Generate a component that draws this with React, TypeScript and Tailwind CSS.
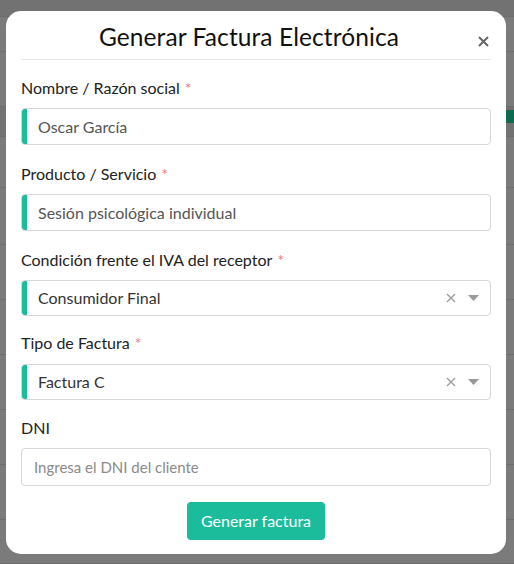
import React from "react";

const font = { fontFamily: "Lato, 'Open Sans', sans-serif" };

function Label({ text, required }: { text: string; required?: boolean }) {
  return (
    <div className="h-[20px] flex items-center text-[16px] text-[#222] leading-none">
      <span>{text}</span>
      {required && <span className="ml-[5px] text-[#e8807a]">*</span>}
    </div>
  );
}

function TextField({ value, accent }: { value: string; accent?: boolean }) {
  return (
    <div className="flex h-[37px] rounded-[4px] border border-[#d6d6d6] overflow-hidden bg-white">
      {accent && <div className="w-[5px] bg-[#1abc9c] shrink-0" />}
      <div className="flex items-center pl-[11px] text-[16px] text-[#555]">{value}</div>
    </div>
  );
}

function SelectField({ value }: { value: string }) {
  return (
    <div className="flex h-[36px] rounded-[4px] border border-[#d6d6d6] overflow-hidden bg-white">
      <div className="w-[5px] bg-[#1abc9c] shrink-0" />
      <div className="flex-1 flex items-center pl-[11px] text-[16px] text-[#333]">{value}</div>
      <div className="flex items-center gap-[12px] pr-[11px]">
        <svg width="10" height="10" viewBox="0 0 10 10">
          <path d="M1 1L9 9M9 1L1 9" stroke="#999" strokeWidth="1.3" />
        </svg>
        <svg width="11" height="6" viewBox="0 0 11 6">
          <path d="M0 0H11L5.5 6Z" fill="#999" />
        </svg>
      </div>
    </div>
  );
}

export default function App() {
  const rows = [17, 35, 55, 30, 51, 57, 55, 55, 55, 55, 55, 44];
  return (
    <div className="relative w-[514px] h-[564px] overflow-hidden bg-[#7b7b7b]" style={font}>
      <div className="flex flex-col">
        {rows.map((h, i) => (
          <div
            key={i}
            className={`border-b border-[#6c6c6c] ${i === 3 || i === 0 ? "bg-[#727272]" : ""}`}
            style={{ height: h }}
          />
        ))}
      </div>
      <div className="absolute right-0 top-[110px] w-[8px] h-[13px] bg-[#0e6b52]" />

      <div className="absolute left-[6px] top-[11px] w-[500px] h-[543px] bg-white rounded-[15px] px-[15px] flex flex-col">
        <div className="relative h-[49px] flex items-end justify-center border-b border-[#e3e6ea] pb-[10px] pr-[14px]">
          <div className="text-[24.5px] leading-none text-[#111] tracking-[0.1px]">Generar Factura Electrónica</div>
          <div className="absolute right-[2px] top-[25px]">
            <svg width="11" height="11" viewBox="0 0 11 11">
              <path d="M1 1L10 10M10 1L1 10" stroke="#666" strokeWidth="2" />
            </svg>
          </div>
        </div>

        <div className="flex flex-col mt-[18px]">
          <Label text="Nombre / Razón social" required />
          <div className="mt-[10px]">
            <TextField value="Oscar García" accent />
          </div>
          <div className="mt-[19px]">
            <Label text="Producto / Servicio" required />
          </div>
          <div className="mt-[10px]">
            <TextField value="Sesión psicológica individual" accent />
          </div>
          <div className="mt-[19px]">
            <Label text="Condición frente el IVA del receptor" required />
          </div>
          <div className="mt-[10px]">
            <SelectField value="Consumidor Final" />
          </div>
          <div className="mt-[17px]">
            <Label text="Tipo de Factura" required />
          </div>
          <div className="mt-[11px]">
            <SelectField value="Factura C" />
          </div>
          <div className="mt-[18px]">
            <Label text="DNI" />
          </div>
          <div className="mt-[10px]">
            <div className="flex items-center h-[38px] rounded-[4px] border border-[#d6d6d6] pl-[12px] text-[15px] text-[#8a8a8a]">
              Ingresa el DNI del cliente
            </div>
          </div>
          <div className="flex justify-center mt-[16px]">
            <button className="h-[38px] w-[138px] rounded-[4px] bg-[#1abc9c] text-white text-[16px]">
              Generar factura
            </button>
          </div>
        </div>
      </div>
    </div>
  );
}
